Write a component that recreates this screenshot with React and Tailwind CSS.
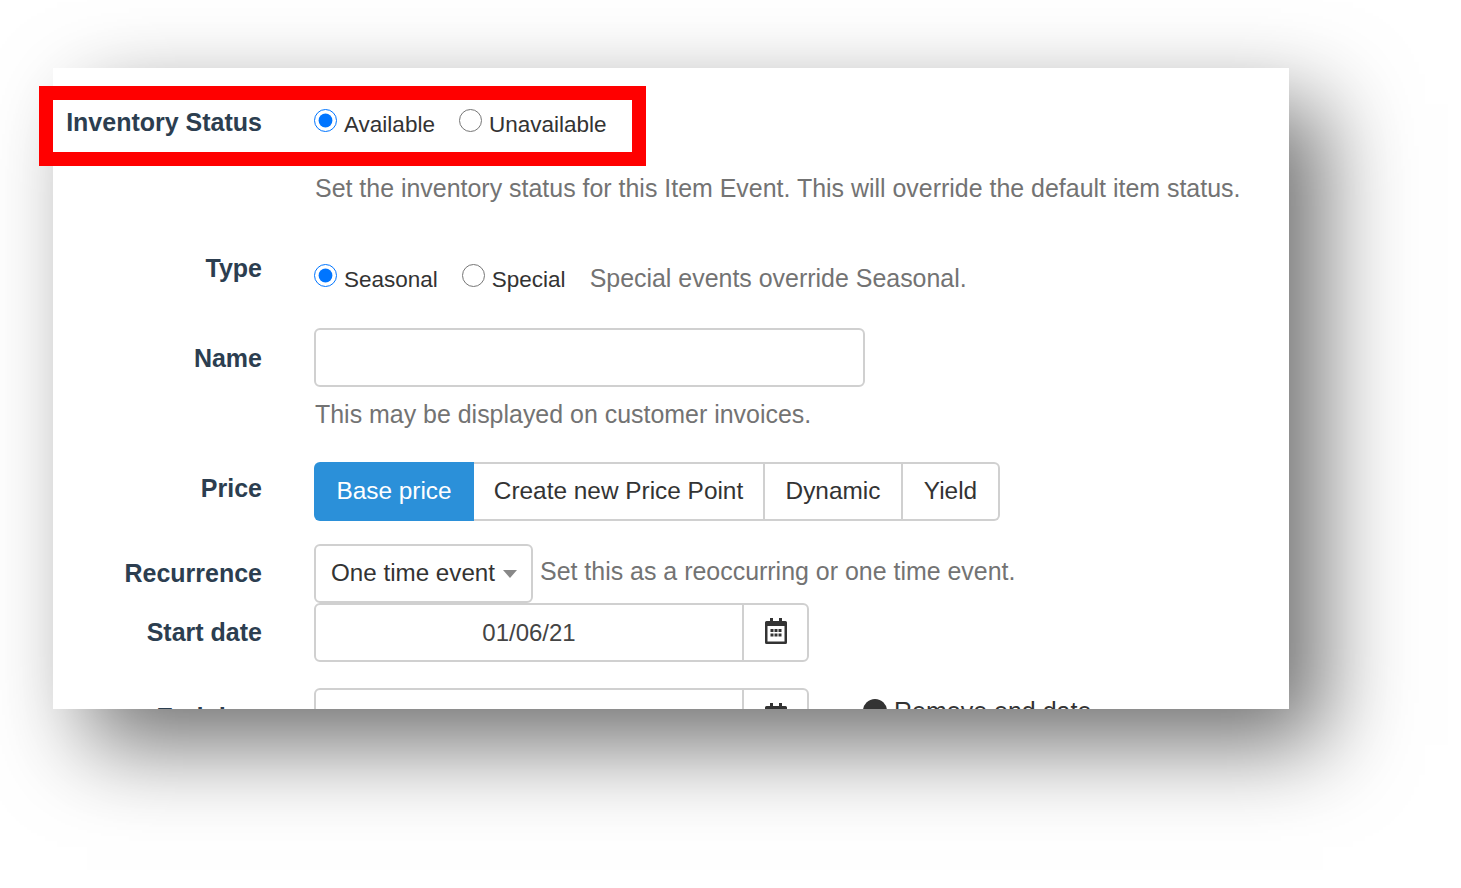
const Label = ({ children, className = "" }) => (
  <label className={`w-[209px] shrink-0 text-right text-[25px] leading-[30px] font-bold text-[#2c3e50] ${className}`}>
    {children}
  </label>
);

const Radio = ({ name, label, checked, className = "" }) => (
  <label className={`flex items-start text-[22.5px] leading-[30px] text-[#333] ${className}`}>
    <input
      type="radio"
      name={name}
      defaultChecked={checked}
      className="m-0 mt-[1px] mr-[7px] w-[23px] h-[23px] accent-[#0075ff]"
    />
    <span className="mt-[2px]">{label}</span>
  </label>
);

const CalendarIcon = () => (
  <svg width="22" height="26" viewBox="0 0 22 26" fill="none" className="mb-[3px]">
    <path d="M5 0h3v3h6V0h3v3h3.500A1.500 1.500 0 0 1 22 4.500V24.500A1.500 1.500 0 0 1 20.500 26H1.500A1.500 1.500 0 0 1 0 24.500V4.500A1.500 1.500 0 0 1 1.500 3H5z" fill="#333" />
    <rect x="2.500" y="8" width="17" height="15.500" fill="#fff" />
    {[6, 10, 14].map((x) =>
      [11, 15.500].map((y) => <rect key={`${x}-${y}`} x={x - 0.5} y={y} width="3" height="3" fill="#333" />)
    )}
  </svg>
);

const DateField = ({ value }) => (
  <div className="flex w-[495px] h-[59px] border-2 border-[#d0d0d0] rounded-[6px] bg-white">
    <input
      readOnly
      value={value}
      className="w-[428px] border-r-2 border-[#d0d0d0] text-center text-[24px] text-[#444] outline-none"
    />
    <div className="flex-1 flex items-center justify-center">
      <CalendarIcon />
    </div>
  </div>
);

export default function App() {
  return (
    <div className="min-h-[888px] bg-white overflow-hidden font-['Liberation_Sans',Arial,sans-serif]">
      <div className="relative ml-[53px] mt-[68px] w-[1236px] h-[641px] bg-white shadow-[34px_36px_84px_rgba(0,0,0,0.56)]">
        <div className="h-full overflow-hidden pt-[40px]">
          <div className="flex">
            <Label className="mt-[-1px]">Inventory Status</Label>
            <div className="ml-[52px] flex">
              <Radio name="status" label="Available" checked />
              <Radio name="status" label="Unavailable" className="ml-[24px]" />
            </div>
          </div>
          <p className="ml-[262px] mt-[33px] text-[24.95px] leading-[30px] text-[#737373]">
            Set the inventory status for this Item Event. This will override the default item status.
          </p>

          <div className="flex mt-[50px]">
            <Label>Type</Label>
            <div className="ml-[52px] flex mt-[-5px] pt-[15px]">
              <Radio name="type" label="Seasonal" checked />
              <Radio name="type" label="Special" className="ml-[24px]" />
              <span className="ml-[24px] mt-[0px] text-[24.95px] leading-[30px] text-[#737373]">
                Special events override Seasonal.
              </span>
            </div>
          </div>

          <div className="flex items-center mt-[33px]">
            <Label>Name</Label>
            <input className="ml-[52px] w-[551px] h-[59px] border-2 border-[#d0d0d0] rounded-[6px] outline-none" />
          </div>
          <p className="ml-[262px] mt-[12px] text-[24.95px] leading-[30px] text-[#737373]">
            This may be displayed on customer invoices.
          </p>

          <div className="flex mt-[33px]">
            <Label className="mt-[11px]">Price</Label>
            <div className="ml-[52px] flex h-[59px] text-[24.4px] text-[#333]">
              <button className="w-[160px] bg-[#2b90d9] text-white rounded-l-[6px]">Base price</button>
              <button className="w-[291px] border-y-2 border-r-2 border-[#d0d0d0]">Create new Price Point</button>
              <button className="w-[138px] border-y-2 border-r-2 border-[#d0d0d0]">Dynamic</button>
              <button className="w-[97px] border-y-2 border-r-2 border-[#d0d0d0] rounded-r-[6px]">Yield</button>
            </div>
          </div>

          <div className="flex mt-[23px]">
            <Label className="mt-[14px]">Recurrence</Label>
            <button className="ml-[52px] flex items-center w-[219px] h-[59px] pl-[15px] border-2 border-[#d0d0d0] rounded-[6px] text-[24.2px] text-[#333]">
              One time event
              <span className="ml-[8px] border-x-[7px] border-x-transparent border-t-[8px] border-t-[#888]" />
            </button>
            <span className="ml-[7px] mt-[12px] text-[24.95px] leading-[30px] text-[#737373]">
              Set this as a reoccurring or one time event.
            </span>
          </div>

          <div className="flex">
            <Label className="mt-[14px]">Start date</Label>
            <div className="ml-[52px]">
              <DateField value="01/06/21" />
            </div>
          </div>

          <div className="flex mt-[26px]">
            <Label className="mt-[14px]">End date</Label>
            <div className="ml-[52px]">
              <DateField value="01/07/21" />
            </div>
            <div className="ml-[54px] mt-[11px] flex items-start text-[25px] leading-[30px] text-[#333]">
              <span className="w-[24px] h-[24px] rounded-full bg-[#333] mr-[7px]" />
              <span className="mt-[-3px]">Remove end date</span>
            </div>
          </div>
        </div>

        {/* red highlight drawn over the first row */}
        <div className="absolute left-[-14px] top-[18px] w-[607px] h-[80px] border-[14px] border-[#ff0000]" />
      </div>
    </div>
  );
}
